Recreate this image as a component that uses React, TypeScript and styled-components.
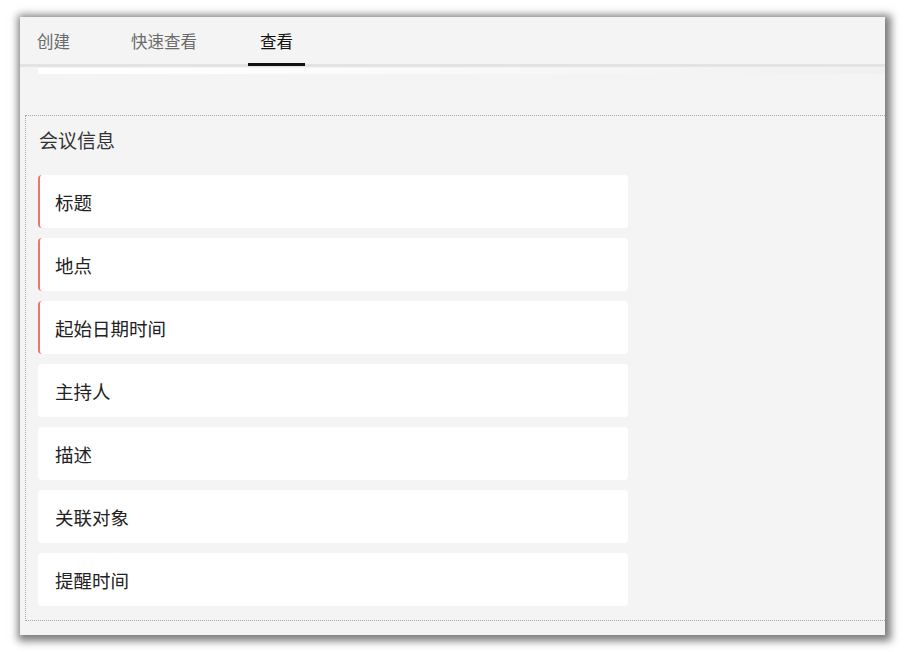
import styled, { createGlobalStyle } from "styled-components";

const GlobalStyle = createGlobalStyle`
	html, body {
		margin: 0;
		padding: 0;
		background: #ffffff;
	}
	body {
		font-family: "Noto Sans CJK SC", "Noto Sans", sans-serif;
	}
`;

const tabs = ["创建", "快速查看", "查看"];
const fields = [
	{ label: "标题", required: true },
	{ label: "地点", required: true },
	{ label: "起始日期时间", required: true },
	{ label: "主持人", required: false },
	{ label: "描述", required: false },
	{ label: "关联对象", required: false },
	{ label: "提醒时间", required: false }
];

const App = () => {
	const active = 2;
	return (
		<Page>
			<GlobalStyle />
			<Panel>
				<TabBar>
					{tabs.map((t, i) => (
						<Tab key={t} $active={i === active}>
							{t}
						</Tab>
					))}
				</TabBar>
				<Strip />
				<Section>
					<Title>会议信息</Title>
					<FieldList>
						{fields.map((f) => (
							<Field key={f.label} $required={f.required}>
								{f.label}
							</Field>
						))}
					</FieldList>
				</Section>
			</Panel>
		</Page>
	);
};

const Page = styled.div`
	padding: 17px 0 0 20px;
	height: 652px;
	box-sizing: border-box;
`;

const Panel = styled.div`
	width: 865px;
	height: 618px;
	background: #f4f4f4;
	box-shadow: 2px 2px 8px 4px rgba(0, 0, 0, 0.52);
	overflow: hidden;
	display: flex;
	flex-direction: column;
`;

const TabBar = styled.div`
	height: 47px;
	display: flex;
	align-items: stretch;
	padding-left: 5px;
	border-bottom: 3px solid #e3e3e3;
`;

const Tab = styled.div<{ $active: boolean }>`
	padding: 1px 12px 0;
	margin-right: 39px;
	display: flex;
	align-items: center;
	font-size: 16.5px;
	color: ${(p) => (p.$active ? "#111" : "#6a6a6a")};
	margin-bottom: -2px;
	border-bottom: ${(p) => (p.$active ? "3px solid #111" : "3px solid transparent")};

	&:first-child {
		margin-right: 37px;
	}
`;

const Strip = styled.div`
	margin: 1px 0 0 18px;
	height: 6px;
	background: linear-gradient(to right, #ffffff 0%, #fbfbfb 40%, #f0f0f0 100%);
`;

const Section = styled.div`
	margin: 41px 0 0 5px;
	border: 1px dotted #a8a8a8;
	border-right: none;
	padding: 11px 0 14px 12px;
	display: flex;
	flex-direction: column;
	gap: 22px;
`;

const Title = styled.div`
	font-size: 19px;
	color: #333;
	line-height: 26px;
	padding-left: 1px;
`;

const FieldList = styled.div`
	display: flex;
	flex-direction: column;
	gap: 10px;
`;

const Field = styled.div<{ $required: boolean }>`
	width: 590px;
	height: 53px;
	box-sizing: border-box;
	background: #ffffff;
	border-radius: 4px;
	border-left: 2px solid ${(p) => (p.$required ? "#f2736b" : "#ffffff")};
	padding-left: 15px;
	display: flex;
	align-items: center;
	font-size: 18.5px;
	color: #222;
`;

export default App;
